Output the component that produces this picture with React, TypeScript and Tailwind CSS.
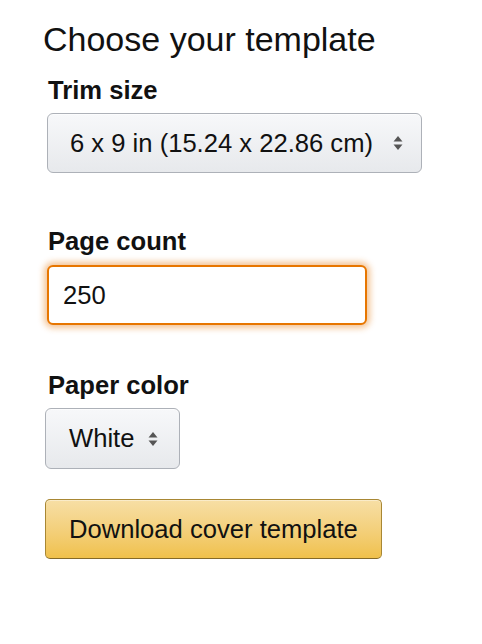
const Arrows = () => (
  <svg width="10" height="16" viewBox="0 0 10 16" className="shrink-0">
    <path d="M5 1 L9.5 6.5 L0.5 6.5 Z" fill="#555" />
    <path d="M5 15 L9.5 9.5 L0.5 9.5 Z" fill="#555" />
  </svg>
);

const Label = ({ text, className }: { text: string; className?: string }) => (
  <p className={`text-[25.6px] font-bold leading-[29px] text-[#111] ${className || ""}`}>{text}</p>
);

const SelectBox = ({ value, className }: { value: string; className: string }) => (
  <div
    className={`flex h-[60px] items-center justify-between rounded-[6px] border border-[#adb1b8] bg-gradient-to-b from-[#f7f8fa] to-[#e7e9ec] text-[25.6px] text-[#111] shadow-[0_1px_0_rgba(255,255,255,0.6)_inset] ${className}`}
  >
    <span>{value}</span>
    <Arrows />
  </div>
);

export default function App() {
  return (
    <div className="min-h-[644px] bg-white pl-[43px] pt-[20px] font-['Liberation_Sans',Arial,sans-serif]">
      <h1 className="text-[34px] font-normal leading-[38px] text-[#111]">Choose your template</h1>

      <Label text="Trim size" className="ml-[5px] mt-[18px]" />
      <SelectBox value="6 x 9 in (15.24 x 22.86 cm)" className="ml-[4px] mt-[8px] w-[375px] pl-[22px] pr-[18px]" />

      <Label text="Page count" className="ml-[5px] mt-[54px]" />
      <div className="ml-[4px] mt-[9px] flex h-[60px] w-[320px] items-center rounded-[6px] border-2 border-[#e77600] bg-white pl-[14px] text-[25.6px] text-[#111] shadow-[0_0_6px_3px_rgba(228,121,17,0.45)]">
        250
      </div>

      <Label text="Paper color" className="ml-[5px] mt-[46px]" />
      <SelectBox value="White" className="ml-[2px] mt-[8px] h-[61px] w-[135px] pl-[23px] pr-[21px]" />

      <button className="ml-[2px] mt-[30px] flex h-[60px] items-center rounded-[5px] border border-[#a88734] border-b-[#846a29] bg-gradient-to-b from-[#f7dfa5] to-[#f0c14b] px-[23px] text-[25.6px] text-[#111] shadow-[0_1px_0_rgba(255,255,255,0.4)_inset]">
        Download cover template
      </button>
    </div>
  );
}
